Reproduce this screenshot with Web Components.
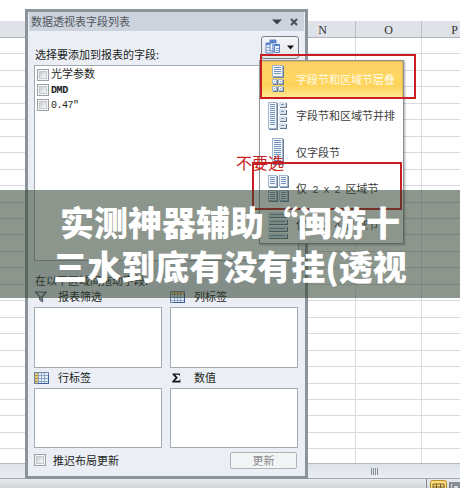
<!DOCTYPE html>
<html lang="zh-CN">
<head>
<meta charset="utf-8">
<title>数据透视表字段列表</title>
<style>
html,body{margin:0;width:460px;height:488px;overflow:hidden;background:#fff}
</style>
</head>
<body>
<pivot-screen></pivot-screen>
<script>
const define = (name, html) => customElements.define(name, class extends HTMLElement {
  constructor() {
    super();
    const t = document.createElement('template');
    t.innerHTML = html;
    this.attachShadow({ mode: 'open' }).appendChild(t.content);
  }
});

const page = (x, y, w, h, n) => {
  let s = `<rect x="${x+1}" y="${y+1}" width="${w}" height="${h}" fill="#687f9b"/><rect x="${x+.5}" y="${y+.5}" width="${w-1}" height="${h-1}" fill="#f2f7fc" stroke="#a3b5c9"/>`;
  for (let i = 0; i < n; i++) s += `<path d="M${x+2} ${y+2.5+i*2}h${w-4}" stroke="#7593bc" stroke-width="1"/>`;
  return s;
};
const bar = (x, y, w, h) => `<rect x="${x+1}" y="${y+1}" width="${w}" height="${h}" fill="#60758d"/><rect x="${x}" y="${y}" width="${w}" height="${h}" fill="#d7e2ed"/><path d="M${x+2} ${y+h/2}h${w-4}" stroke="#7b94b2"/>`;
const menuIcons = {
  stacked: page(4,0,11,12,4) + page(4,14,5,5,1) + page(10,14,5,5,1) + page(4,21,5,5,1) + page(10,21,5,5,1),
  side: page(0,0,9,27,11) + bar(11,0,7,5) + bar(11,7,7,5) + bar(11,14,7,5) + bar(11,21,7,5),
  fields: page(4,0,11,26,11),
  grid: page(0,0,9,12,4) + page(11,0,9,12,4) + page(0,15,9,11,4) + page(11,15,9,11,4),
  list: bar(0,0,19,5) + bar(0,7,19,5) + bar(0,14,19,5) + bar(0,21,19,5)
};
const table = side => `<rect x=".5" y=".5" width="14" height="11" fill="#e4edf8" stroke="#7186a4"/><path d="M4.5 1v11M7.5 1v11M10.5 1v11M1 3.5h13M1 6.5h13M1 9.5h13" stroke="#8fa8cb"/>${side ? '<path d="M1 1h3v10H1z" fill="#e5c970"/><path d="M1 3.5h3M1 6.5h3M1 9.5h3" stroke="#a89058"/>' : '<path d="M1 1h13v2.5H1z" fill="#e5c970"/><path d="M4.5 1v3M7.5 1v3M10.5 1v3" stroke="#a89058"/>'}<path d="M14.5 3v8.5H4" fill="none" stroke="#3d5f99"/>`;
const areaIcons = {
  filter: '<path d="M1 1h12L8.6 6v5L5.6 9V6z" fill="#7c858d" stroke="#555f68"/><path d="M3 1.8h7L7 5.5z" fill="#dfe5e9"/>',
  columns: table(false),
  rows: table(true),
  sigma: '<path d="M2.5 1.5H10V4L8.8 2.7H5.2l2.7 3-3 3.1h4.2L10.4 7v3.5H2.3V9.3l3.2-3.5-3-3.2z" fill="#16191c"/>'
};

define('check-box', `<style>:host{display:block;flex:none;box-sizing:border-box;width:12px;height:12px;border:1px solid #9ba0a5;background:#f6f6f6;padding:1px}i{display:block;box-sizing:border-box;width:8px;height:8px;border:1px solid #c4c8cc;background:linear-gradient(135deg,#c7cbd0,#fbfbfb)}</style><i></i>`);

define('field-row', `<style>:host{display:flex;align-items:center;height:15.4px;gap:2px;padding-left:2px}check-box{margin-top:2px}span{white-space:pre}</style><check-box></check-box><span><slot></slot></span>`);

define('tool-button', `<style>:host{display:flex;box-sizing:border-box;width:38px;height:23px;border:1px solid #777e86;border-radius:3px;background:linear-gradient(#f5f6f8,#e3e6ea);padding:2px 3px;align-items:center;gap:6px}</style>
<svg width="16" height="17"><path d="M1 4h7v10H1zM5 1h6v11H5z" fill="#eaf3ff" stroke="#6584bd"/><path d="M5 1h6v3H5zM1 4h4v2H1zM10 5h5v2h-5z" fill="#5b81d1"/><path d="M9.5 5.5h5v8h-5z" fill="#e8f2ff" stroke="#6584bd"/><path d="M9 5h6v2H9z" fill="#5b81d1"/><path d="M2 8.5h3M2 11.5h3M7 6.5h2M7 9.5h2M11 9.5h3M11 11.5h3" stroke="#85a4d8"/></svg>
<svg width="7" height="5"><path d="M0 .5h7L3.5 4.5z" fill="#111"/></svg>`);

customElements.define('drop-area', class extends HTMLElement {
  connectedCallback() {
    if (this.shadowRoot) return;
    this.attachShadow({ mode: 'open' }).innerHTML = `<style>:host{display:grid;grid-template-rows:20px 60.5px}.h{display:flex;align-items:center;gap:9px}.h span{margin-top:-1px}.b{box-sizing:border-box;border:1px solid #a3abb3;background:#fff}svg{display:block}</style>
    <div class="h"><svg width="15" height="12">${areaIcons[this.getAttribute('icon')]}</svg><span><slot></slot></span></div><div class="b"></div>`;
  }
});

customElements.define('menu-item', class extends HTMLElement {
  connectedCallback() {
    if (this.shadowRoot) return;
    this.attachShadow({ mode: 'open' }).innerHTML = `<style>:host{display:flex;box-sizing:border-box;height:36.6px;align-items:center;gap:7px;padding-left:8px;white-space:pre;color:#3d3d3d}:host([active]){color:#fffbe9;background:linear-gradient(#fbcf68,#ffd762 45%,#fdd258 65%,#ffe893);box-shadow:inset 0 0 0 1px #e5b64c}svg{display:block;flex:none}</style>
    <svg width="21" height="28">${menuIcons[this.getAttribute('icon')]}</svg><span><slot></slot></span>`;
  }
});

define('layout-menu', `<style>:host{display:block;box-sizing:border-box;width:145px;height:184px;border:1px solid #8f9499;background:#fff;box-shadow:1px 1px 2px #0005}</style><slot></slot>`);

define('sheet-grid', `<style>
:host{display:grid;grid-template-rows:21px 17px 425px 16px 9px;width:460px;height:488px;background:#fff}
.head{display:grid;grid-template-columns:290px 66px 66px 66px;background:#dfe2e7;border-bottom:1px solid #aeb4bb;box-sizing:border-box;overflow:hidden;font:12px/18px "Liberation Serif",serif;color:#333}
.head span{box-sizing:border-box;border-right:1px solid #b9bec5;text-align:center}
.cells{display:grid;grid-template-columns:290px 66px 66px 66px;grid-auto-rows:16.46px;overflow:hidden}
.cells i{border-right:1px solid #dcdddf;border-bottom:1px solid #d9dadc}
.scroll{box-sizing:border-box;border-top:1px solid #b4b9c0;border-bottom:1px solid #a1a7ae;background:linear-gradient(#dde2e9,#eaeef3);display:flex;align-items:center;padding-left:371px;gap:1px}
.scroll i{width:1px;height:7px;background:#888e96}
.status{background:linear-gradient(#e9ebee,#d2d5da);display:flex;padding-left:426px;overflow:hidden;gap:2px}
.status b{width:1px;height:9px;background:#868b92;margin-right:1px}
</style><div></div>
<div class="head"><span></span><span>N</span><span>O</span><span>P</span></div>
<div class="cells">${'<i></i>'.repeat(4 * 26)}</div>
<div class="scroll"><i></i><i></i><i></i><i></i></div>
<div class="status"><b></b><svg width="30" height="9"><rect x=".5" y="1.5" width="16" height="14" rx="2" fill="#ffdc73" stroke="#b98d32"/><path d="M3 9V5h11v4M6.5 5v4M10.5 5v4M3 8h11" fill="none" stroke="#745d35"/><path d="M20 9V4h10M23 9V6h6v3" fill="none" stroke="#70757d" stroke-width="1.6"/></svg></div>`);

define('field-panel', `<style>
:host{display:flex;flex-direction:column;box-sizing:border-box;width:283px;height:470px;border:3px solid #8b949b;background:#ebeef5;padding-left:1px;color:#1c1f22}
.title{display:flex;align-items:center;height:19px;background:#ccd3dc;color:#50565d;padding:0 6px 0 2px;margin-right:1px}
.title span{flex:1}
.title svg{margin-left:8px}
.pick{display:flex;height:34px;padding:0 6px;justify-content:space-between;align-items:flex-end;box-sizing:border-box}
.pick span{line-height:15px;margin-bottom:3px}
tool-button{margin-bottom:6px}
.list{box-sizing:border-box;height:196px;border:1px solid #a3abb3;background:#fff;margin:0 6px 0 5px}
.hint{height:26px;line-height:15px;padding:12px 6px 0;box-sizing:border-box}
.areas{display:grid;grid-template-columns:128px 128px;column-gap:8px;margin-left:5px}
.foot{display:flex;align-items:center;padding:0 8px 0 5px;height:24px;gap:7px}
.foot span{flex:1}
button{box-sizing:border-box;width:67px;height:17px;border:1px solid #b0b4b8;border-radius:2px;background:#f3f4f5;color:#898c90;font:inherit;line-height:14px;padding:0}
</style>
<div class="title"><span>数据透视表字段列表</span><svg width="10" height="6"><path d="M0 .5h10L5 5.5z" fill="#3d434a"/></svg><svg width="8" height="8"><path d="M1 1l6 6M7 1L1 7" stroke="#4a5057" stroke-width="2"/></svg></div>
<div class="pick"><span>选择要添加到报表的字段:</span><tool-button></tool-button></div>
<div class="list"><slot></slot></div>
<div class="hint">在以下区域间拖动字段:</div>
<div class="areas"><drop-area icon="filter">报表筛选</drop-area><drop-area icon="columns">列标签</drop-area><drop-area icon="rows">行标签</drop-area><drop-area icon="sigma">数值</drop-area></div>
<div class="foot"><check-box></check-box><span>推迟布局更新</span><button>更新</button></div>`);

define('caption-band', `<style>:host{display:flex;box-sizing:border-box;width:460px;height:108px;background:rgba(48,64,48,.55);color:#fff;font:900 34px/44px "Noto Sans CJK SC",sans-serif;flex-direction:column;align-items:center;justify-content:center;white-space:nowrap}</style><slot></slot>`);

define('pivot-screen', `<style>
:host{display:block;position:relative;width:460px;height:488px;overflow:hidden;font:11px/15px "Noto Sans CJK SC",sans-serif}
field-panel,layout-menu,caption-band,.mark,.note{position:absolute}
field-panel{left:25px;top:9px}
layout-menu{left:259px;top:60px}
.mark{box-sizing:border-box;border:2px solid #c81f22}
.one{left:260px;top:54px;width:156px;height:45px}
.two{left:252px;top:162px;width:150px;height:48px}
.note{left:236px;top:152px;font-size:16px;line-height:20px;color:#c81f22}
caption-band{left:0;top:190px}
.m{font:10px/15px "Liberation Mono",monospace;letter-spacing:-.5px}
.d{font-weight:bold;letter-spacing:-.4px}
.n{font:10px/15px "Liberation Mono",monospace;letter-spacing:-.5px}
</style>
<sheet-grid></sheet-grid>
<field-panel><field-row>光学参数</field-row><field-row><span class="m d">DMD</span></field-row><field-row><span class="m">0.47″</span></field-row></field-panel>
<layout-menu><menu-item icon="stacked" active>字段节和区域节层叠</menu-item><menu-item icon="side">字段节和区域节并排</menu-item><menu-item icon="fields">仅字段节</menu-item><menu-item icon="grid">仅<span class="n"> 2 x 2 </span>区域节</menu-item><menu-item icon="list">仅<span class="n"> 1 x 4 </span>区域节</menu-item></layout-menu>
<div class="note">不要选</div>
<div class="mark one"></div><div class="mark two"></div>
<caption-band><div>实测神器辅助“闽游十</div><div>三水到底有没有挂(透视</div></caption-band>`);
</script>
</body>
</html>
